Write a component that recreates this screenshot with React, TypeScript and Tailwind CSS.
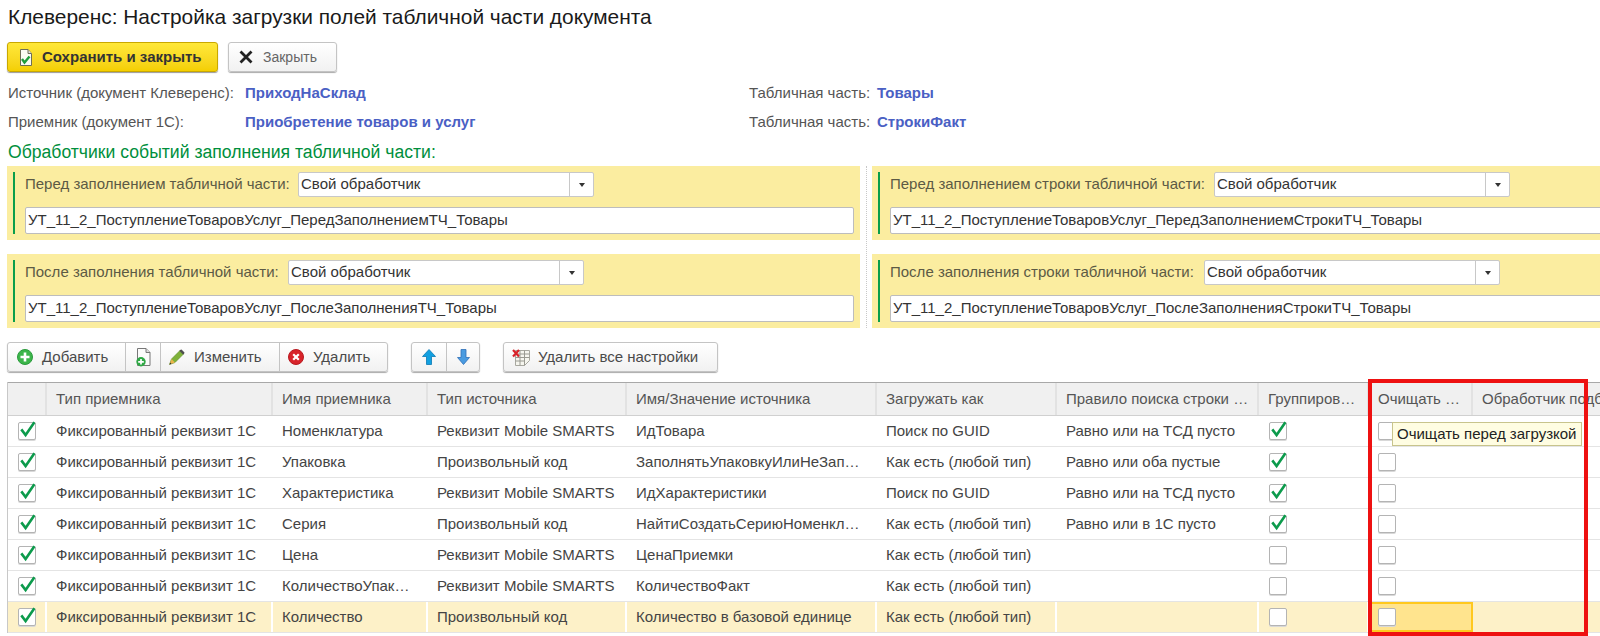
import type { ReactNode } from 'react';

const COLS = [
  'w-[39px]',
  'w-[226px]',
  'w-[155px]',
  'w-[199px]',
  'w-[250px]',
  'w-[180px]',
  'w-[202px]',
  'w-[110px]',
  'w-[104px]',
  'w-[300px]',
];

const HEADERS = [
  '',
  'Тип приемника',
  'Имя приемника',
  'Тип источника',
  'Имя/Значение источника',
  'Загружать как',
  'Правило поиска строки …',
  'Группиров…',
  'Очищать …',
  'Обработчик подбора',
];

const ROWS = [
  ['Номенклатура', 'Реквизит Mobile SMARTS', 'ИдТовара', 'Поиск по GUID', 'Равно или на ТСД пусто', true],
  ['Упаковка', 'Произвольный код', 'ЗаполнятьУпаковкуИлиНеЗап…', 'Как есть (любой тип)', 'Равно или оба пустые', true],
  ['Характеристика', 'Реквизит Mobile SMARTS', 'ИдХарактеристики', 'Поиск по GUID', 'Равно или на ТСД пусто', true],
  ['Серия', 'Произвольный код', 'НайтиСоздатьСериюНоменкл…', 'Как есть (любой тип)', 'Равно или в 1С пусто', true],
  ['Цена', 'Реквизит Mobile SMARTS', 'ЦенаПриемки', 'Как есть (любой тип)', '', false],
  ['КоличествоУпак…', 'Реквизит Mobile SMARTS', 'КоличествоФакт', 'Как есть (любой тип)', '', false],
  ['Количество', 'Произвольный код', 'Количество в базовой единице', 'Как есть (любой тип)', '', false],
] as const;

function Checkbox({ checked }: { checked?: boolean }) {
  return (
    <div className="relative h-[18px] w-[18px] rounded-[2px] border border-[#b4b4b4] bg-white shadow-[0_1px_0_#d8d8d8]">
      {checked && (
        <svg className="absolute left-[-1px] top-[-1px] overflow-visible" width="18" height="18" viewBox="0 0 18 18">
          <path d="M3.3 7.4 7.6 13 16.4 0.3" fill="none" stroke="#0c9b4c" strokeWidth="2.6" />
        </svg>
      )}
    </div>
  );
}

function SaveIcon() {
  return (
    <svg width="14" height="17" viewBox="0 0 14 17">
      <path d="M1.5.5h7.5l3.500 4v12h-11z" fill="#fbfbf2" stroke="#6e6e55" />
      <path d="M9 .5v4h3.500" fill="#ddd" stroke="#6e6e55" />
      <path d="M3 10 5.500 13.500 10.500 7.500" fill="none" stroke="#1f9e3c" strokeWidth="2.400" />
    </svg>
  );
}

function CloseIcon() {
  return (
    <svg width="14" height="14" viewBox="0 0 14 14">
      <path d="M1.500 1.500 12.500 12.500M12.500 1.500 1.500 12.500" stroke="#222" strokeWidth="2.800" />
    </svg>
  );
}

function AddIcon() {
  return (
    <svg width="16" height="16" viewBox="0 0 16 16">
      <circle cx="8" cy="8" r="7.500" fill="#3cb54a" stroke="#2a9a3c" />
      <path d="M8 3.500v9M3.500 8h9" stroke="#fff" strokeWidth="2.600" />
    </svg>
  );
}

function CopyIcon() {
  return (
    <svg width="15" height="19" viewBox="0 0 15 19">
      <path d="M1.500.5h8.500l4 4v13h-12.500z" fill="#fbfbfb" stroke="#777" />
      <path d="M10 .5v4h4" fill="#ddd" stroke="#777" />
      <circle cx="5" cy="13.800" r="4.700" fill="#2fa845" />
      <path d="M5 11v5.600M2.200 13.800h5.600" stroke="#fff" strokeWidth="1.700" />
    </svg>
  );
}

function PencilIcon() {
  return (
    <svg width="16" height="16" viewBox="0 0 16 16">
      <path d="M.5 15.500 2.500 10 11 1.500 14.500 5 6 13.500z" fill="#7fb23a" stroke="#5a8a26" strokeWidth=".6" />
      <path d="M11 1 12.500 .5 15.500 3.500 15 5 14 5.500 10.500 2z" fill="#4f4f4f" />
      <path d="M.5 15.500 2.500 10 6 13.500z" fill="#e9b44c" />
      <path d="M.5 15.500 1.200 13.500 2.500 14.800z" fill="#333" />
    </svg>
  );
}

function DeleteIcon() {
  return (
    <svg width="16" height="16" viewBox="0 0 16 16">
      <circle cx="8" cy="8" r="7.500" fill="#d8232a" stroke="#b81a20" />
      <path d="M5.200 5.200 10.800 10.800M10.800 5.200 5.200 10.800" stroke="#fff" strokeWidth="2.200" />
    </svg>
  );
}

function ArrowIcon({ down }: { down?: boolean }) {
  return down ? (
    <svg width="13" height="16" viewBox="0 0 13 16">
      <path d="M4 .5h5v8h3.500l-6 7-6-7h3.500z" fill="#4a9be0" stroke="#2f6fb8" strokeWidth=".8" />
    </svg>
  ) : (
    <svg width="14" height="16" viewBox="0 0 14 16">
      <path d="M4.500 15.500h5v-8h4L7 .5.500 7.500h4z" fill="#12a0e0" stroke="#0a78b4" strokeWidth=".8" />
    </svg>
  );
}

function SheetIcon() {
  return (
    <svg width="18" height="17" viewBox="0 0 18 17">
      <path d="M3.500 1.500h14v10l-5 5h-9z" fill="#f6f6ef" stroke="#a8a8a0" />
      <path d="M3.500 5h14M3.500 8.500h14M3.500 12h9M8 1.500v15M12.500 1.500v15" stroke="#9a9a92" />
      <path d="M1 1 7 7.500M7 1 1 7.500" stroke="#d8232a" strokeWidth="2.200" />
    </svg>
  );
}

function Handler({
  label,
  labelWidth,
  value,
}: {
  label: string;
  labelWidth: string;
  value: string;
}) {
  return (
    <div className="flex h-[74px] bg-[#fbeda0] py-[6px] pl-[6px] pr-[6px]">
      <div className="flex min-w-0 flex-1 flex-col justify-between border-l-2 border-[#0a9e4b] pl-[10px]">
        <div className="flex items-center">
          <div className={`${labelWidth} whitespace-nowrap text-[15px] text-[#5c5a45]`}>{label}</div>
          <div className="flex h-[25px] w-[296px] items-center rounded-[2px] border border-[#c8c8c8] bg-white text-[15px] text-[#333]">
            <span className="flex-1 pl-[2px]">Свой обработчик</span>
            <span className="flex h-full w-[24px] items-center justify-center border-l border-[#c8c8c8]">
              <span className="h-0 w-0 border-x-[3px] border-t-[4px] border-x-transparent border-t-[#333]" />
            </span>
          </div>
        </div>
        <div className="flex h-[27px] items-center rounded-[2px] border border-[#bdbdbd] bg-white pl-[2px] text-[15px] text-[#333]">
          {value}
        </div>
      </div>
    </div>
  );
}

function ToolButton({ icon, label, className }: { icon: ReactNode; label?: string; className: string }) {
  return (
    <div className={`flex h-full items-center border-r border-[#c4c4c4] last:border-r-0 ${className}`}>
      {icon}
      {label && <span>{label}</span>}
    </div>
  );
}

const groupClass =
  'flex h-[30px] items-center rounded-[3px] border border-[#c4c4c4] bg-gradient-to-b from-white to-[#f1f1f1] text-[15px] text-[#4a4a4a] shadow-[0_1px_1px_#aaa]';

export default function App() {
  return (
    <div
      className="relative h-[636px] w-[1600px] overflow-hidden bg-white text-[#444]"
      style={{ fontFamily: '"Liberation Sans", Arial, sans-serif' }}
    >
      <div className="flex h-[34px] items-center pl-[8px] text-[20.9px] text-[#1a1a1a]">
        Клеверенс: Настройка загрузки полей табличной части документа
      </div>

      <div className="mt-[8px] flex gap-[10px] pl-[7px]">
        <div className="flex h-[30px] w-[211px] items-center rounded-[3px] border border-[#c9a800] bg-gradient-to-b from-[#ffe838] to-[#f4cf00] pl-[11px] text-[15px] font-bold text-[#333] shadow-[0_1px_1px_#999]">
          <SaveIcon />
          <span className="ml-[9px]">Сохранить и закрыть</span>
        </div>
        <div className="flex h-[30px] w-[109px] items-center rounded-[3px] border border-[#c4c4c4] bg-gradient-to-b from-white to-[#f1f1f1] pl-[10px] text-[14px] text-[#666] shadow-[0_1px_1px_#aaa]">
          <CloseIcon />
          <span className="ml-[10px]">Закрыть</span>
        </div>
      </div>

      <div className="mt-[6px] flex h-[30px] items-center pl-[8px] text-[15px] text-[#555]">
        <div className="w-[237px]">Источник (документ Клеверенс):</div>
        <div className="w-[504px] font-bold text-[#4a60c4]">ПриходНаСклад</div>
        <div className="w-[128px]">Табличная часть:</div>
        <div className="font-bold text-[#4a60c4]">Товары</div>
      </div>
      <div className="flex h-[29px] items-center pl-[8px] text-[15px] text-[#555]">
        <div className="w-[237px]">Приемник (документ 1С):</div>
        <div className="w-[504px] font-bold text-[#4a60c4]">Приобретение товаров и услуг</div>
        <div className="w-[128px]">Табличная часть:</div>
        <div className="font-bold text-[#4a60c4]">СтрокиФакт</div>
      </div>
      <div className="flex h-[29px] items-center pl-[8px] pt-[2px] text-[17.6px] text-[#008f3c]">
        Обработчики событий заполнения табличной части:
      </div>

      <div className="flex pl-[7px]">
        <div className="flex w-[853px] shrink-0 flex-col gap-[14px]">
          <Handler
            label="Перед заполнением табличной части:"
            labelWidth="w-[273px]"
            value="УТ_11_2_ПоступлениеТоваровУслуг_ПередЗаполнениемТЧ_Товары"
          />
          <Handler
            label="После заполнения табличной части:"
            labelWidth="w-[263px]"
            value="УТ_11_2_ПоступлениеТоваровУслуг_ПослеЗаполненияТЧ_Товары"
          />
        </div>
        <div className="ml-[6px] mr-[5px] border-l border-dotted border-[#c8c8c8]" />
        <div className="flex w-[760px] shrink-0 flex-col gap-[14px]">
          <Handler
            label="Перед заполнением строки табличной части:"
            labelWidth="w-[324px]"
            value="УТ_11_2_ПоступлениеТоваровУслуг_ПередЗаполнениемСтрокиТЧ_Товары"
          />
          <Handler
            label="После заполнения строки табличной части:"
            labelWidth="w-[314px]"
            value="УТ_11_2_ПоступлениеТоваровУслуг_ПослеЗаполненияСтрокиТЧ_Товары"
          />
        </div>
      </div>

      <div className="mt-[14px] flex pl-[7px]">
        <div className={`${groupClass} w-[381px]`}>
          <ToolButton className="w-[118px] gap-[9px] pl-[9px]" icon={<AddIcon />} label="Добавить" />
          <ToolButton className="w-[35px] justify-center" icon={<CopyIcon />} />
          <ToolButton className="w-[119px] gap-[9px] pl-[8px]" icon={<PencilIcon />} label="Изменить" />
          <ToolButton className="flex-1 gap-[9px] pl-[8px]" icon={<DeleteIcon />} label="Удалить" />
        </div>
        <div className={`${groupClass} ml-[23px] w-[69px]`}>
          <ToolButton className="w-[35px] justify-center" icon={<ArrowIcon />} />
          <ToolButton className="flex-1 justify-center" icon={<ArrowIcon down />} />
        </div>
        <div className={`${groupClass} ml-[23px] w-[215px] gap-[8px] pl-[8px]`}>
          <SheetIcon />
          <span>Удалить все настройки</span>
        </div>
      </div>

      <div className="ml-[7px] mt-[10px] w-[1700px] border-l border-[#c8c8c8] text-[15px]">
        <div className="flex h-[34px] border-y border-t-[#a8a8a8] border-b-[#d0d0d0] bg-[#f0f0f0]">
          {HEADERS.map((header, i) => (
            <div
              key={i}
              className={`${COLS[i]} flex shrink-0 items-center whitespace-nowrap border-r-2 border-[#e2e2e2] pl-[9px] text-[#555]`}
            >
              {header}
            </div>
          ))}
        </div>
        {ROWS.map((row, r) => {
          const active = r === ROWS.length - 1;
          const cell = `flex shrink-0 items-center whitespace-nowrap pl-[9px] ${
            active ? 'border-r-2 border-white bg-[#fdf1c8]' : ''
          }`;
          const boxCell = `flex shrink-0 items-center pl-[10px] ${active ? 'border-r-2 border-white bg-[#fdf1c8]' : ''}`;
          return (
            <div key={r} className="flex h-[31px] border-b border-[#e4e4e4]">
              <div className={`${COLS[0]} ${boxCell}`}>
                <Checkbox checked />
              </div>
              <div className={`${COLS[1]} ${cell}`}>Фиксированный реквизит 1С</div>
              <div className={`${COLS[2]} ${cell}`}>{row[0]}</div>
              <div className={`${COLS[3]} ${cell}`}>{row[1]}</div>
              <div className={`${COLS[4]} ${cell}`}>{row[2]}</div>
              <div className={`${COLS[5]} ${cell}`}>{row[3]}</div>
              <div className={`${COLS[6]} ${cell}`}>{row[4]}</div>
              <div className={`${COLS[7]} ${boxCell}`}>
                <Checkbox checked={row[5]} />
              </div>
              {active ? (
                <div className={`${COLS[8]} flex shrink-0 items-center border-2 border-[#ffc81e] bg-[#ffe48e] pl-[7px]`}>
                  <Checkbox />
                </div>
              ) : (
                <div className={`${COLS[8]} flex shrink-0 items-center pl-[9px]`}>
                  <Checkbox />
                </div>
              )}
              <div className={`flex-1 ${active ? 'bg-[#fdf1c8]' : ''}`} />
            </div>
          );
        })}
      </div>

      <div className="absolute left-[1392px] top-[422px] flex h-[24px] w-[190px] items-center whitespace-nowrap border border-[#c8c48c] bg-[#fffde2] pl-[4px] text-[15px] text-[#222]">
        Очищать перед загрузкой
      </div>
      <div className="absolute left-[1368px] top-[379px] h-[257px] w-[220px] border-[4px] border-[#ee1111]" />
    </div>
  );
}
